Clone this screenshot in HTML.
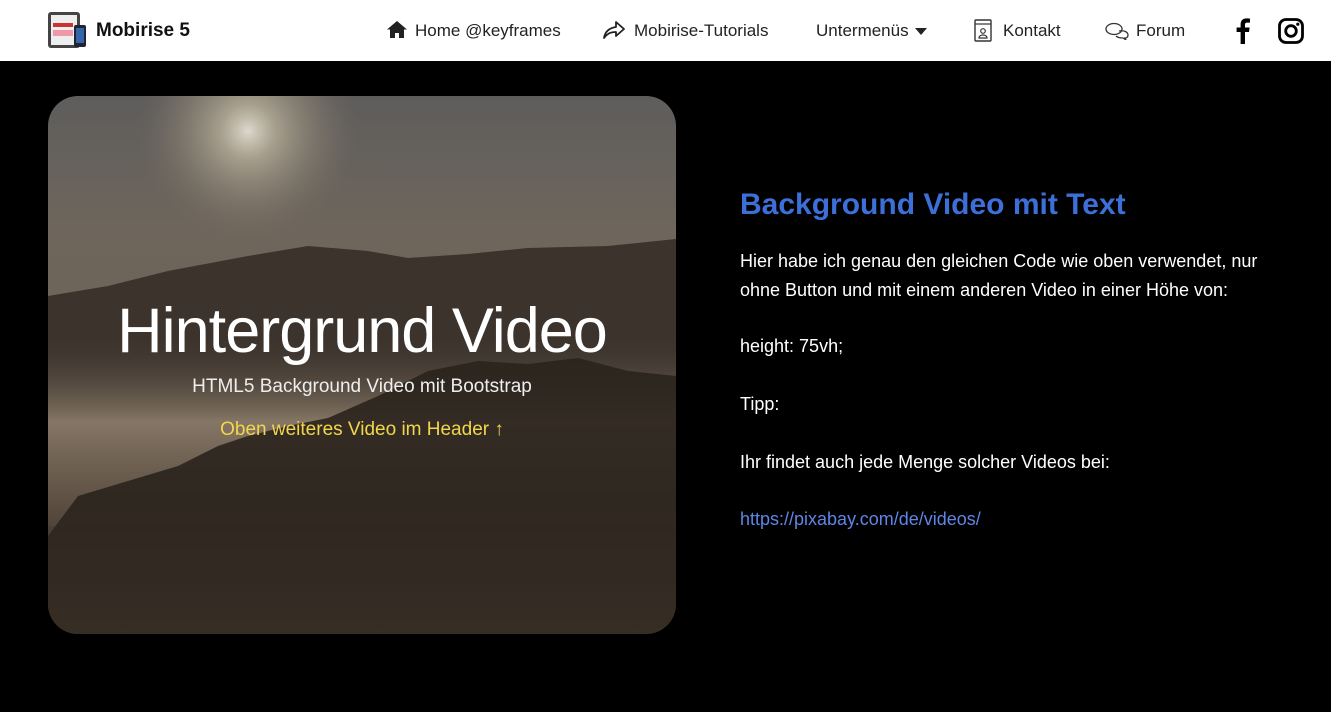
<!DOCTYPE html>
<html><head><meta charset="utf-8"><style>
*{margin:0;padding:0;box-sizing:border-box}
body{width:1331px;height:712px;background:#000;font-family:"Liberation Sans",sans-serif;overflow:hidden;position:relative}
.nav{position:absolute;left:0;top:0;width:1331px;height:61px;background:#fff}
.nav span,.nav div{position:absolute}
.it{top:21px;font-size:17px;color:#222;white-space:nowrap}
.hero{position:absolute;left:48px;top:96px;width:628px;height:538px;border-radius:30px;overflow:hidden}
.t{position:absolute;left:0;width:628px;text-align:center;white-space:nowrap}
.r{position:absolute;left:740px;color:#fff;font-size:18px;white-space:nowrap}
</style></head><body>
<div class="nav">
 <svg style="position:absolute;left:47px;top:11px" width="42" height="38" viewBox="0 0 42 38">
  <rect x="1" y="1" width="32" height="36" rx="3" fill="#444"/>
  <rect x="4" y="4" width="26" height="30" fill="#eee"/>
  <rect x="6" y="12" width="20" height="4" fill="#c33"/>
  <rect x="6" y="19" width="20" height="6" fill="#e9a"/>
  <rect x="27" y="14" width="12" height="22" rx="2" fill="#223"/>
  <rect x="29" y="17" width="8" height="15" fill="#36a"/>
 </svg>
 <span class="it" style="left:96px;top:20px;font-weight:bold;font-size:19px;color:#111">Mobirise 5</span>
 <svg style="position:absolute;left:387px;top:21px" width="20" height="17" viewBox="0 0 20 17"><path d="M10 0L0 8.5h3V17h5v-5h4v5h5V8.5h3z" fill="#222"/></svg>
 <span class="it" style="left:415px">Home @keyframes</span>
 <svg style="position:absolute;left:603px;top:21px" width="22" height="18" viewBox="0 0 22 18"><path d="M13 1l8 7-8 7v-4C7 11 4 13 1 17c1-6 5-10 12-11z" fill="none" stroke="#222" stroke-width="1.8" stroke-linejoin="round"/></svg>
 <span class="it" style="left:634px">Mobirise-Tutorials</span>
 <span class="it" style="left:816px">Untermenüs</span>
 <svg style="position:absolute;left:915px;top:28px" width="12" height="7"><path d="M0 0h12L6 7z" fill="#222"/></svg>
 <svg style="position:absolute;left:974px;top:19px" width="18" height="23" viewBox="0 0 18 23"><rect x="1" y="1" width="16" height="21" rx="1" fill="none" stroke="#333" stroke-width="1.4"/><path d="M1 5h16" stroke="#333" stroke-width="1.2"/><circle cx="9" cy="12" r="2.3" fill="none" stroke="#333" stroke-width="1.2"/><path d="M5 19c0-4 8-4 8 0z" fill="none" stroke="#333" stroke-width="1.2"/></svg>
 <span class="it" style="left:1003px">Kontakt</span>
 <svg style="position:absolute;left:1105px;top:22px" width="24" height="18" viewBox="0 0 24 18"><ellipse cx="9" cy="7" rx="8" ry="5.5" fill="none" stroke="#333" stroke-width="1.3"/><path d="M14 9c5-1 9 1 9 4s-2 3-3 3l1 2-3-2c-4 0-6-1-7-2" fill="none" stroke="#333" stroke-width="1.3"/></svg>
 <span class="it" style="left:1136px">Forum</span>
 <svg style="position:absolute;left:1236px;top:18px" width="14" height="26" viewBox="0 0 14 26"><path d="M9 26V14h4l.6-4.5H9V6.8C9 5.5 9.4 4.6 11.3 4.6H14V.6C13.5.5 12 .4 10.5.4 7 .4 4.6 2.5 4.6 6.4v3.1H.6V14h4v12z" fill="#000"/></svg>
 <svg style="position:absolute;left:1278px;top:18px" width="26" height="26" viewBox="0 0 26 26"><rect x="1.5" y="1.5" width="23" height="23" rx="6.5" fill="none" stroke="#000" stroke-width="2.8"/><circle cx="13" cy="13" r="5.3" fill="none" stroke="#000" stroke-width="2.8"/><circle cx="19.8" cy="6.2" r="1.6" fill="#000"/></svg>
</div>

<div class="hero">
 <svg width="628" height="538" viewBox="0 0 628 538" style="position:absolute;left:0;top:0">
  <defs>
   <linearGradient id="sky" x1="0" y1="0" x2="0" y2="1">
    <stop offset="0" stop-color="#5e5d5c"/><stop offset=".25" stop-color="#6e665c"/><stop offset=".45" stop-color="#6e6356"/><stop offset="1" stop-color="#3a3028"/>
   </linearGradient>
   <radialGradient id="sun" cx="200" cy="35" r="110" gradientUnits="userSpaceOnUse">
    <stop offset="0" stop-color="#dcd8cc"/><stop offset=".25" stop-color="#b3aa96" stop-opacity=".85"/><stop offset="1" stop-color="#7a6e60" stop-opacity="0"/>
   </radialGradient>
   <linearGradient id="fog" x1="0" y1="0" x2="0" y2="1">
    <stop offset="0" stop-color="#463d35" stop-opacity="0"/><stop offset=".45" stop-color="#857665"/><stop offset="1" stop-color="#5a4c3e" stop-opacity=".6"/>
   </linearGradient>
   <linearGradient id="bot" x1="0" y1="0" x2="0" y2="1">
    <stop offset="0" stop-color="#3b3128" stop-opacity="0"/><stop offset="1" stop-color="#3b3128" stop-opacity=".7"/>
   </linearGradient>
  </defs>
  <rect width="628" height="538" fill="url(#sky)"/>
  <rect width="628" height="538" fill="url(#sun)"/>
  <path d="M0 200L60 190 120 175 200 160 260 150 320 155 360 162 420 158 480 152 560 150 628 143V330H0z" fill="#3b332c"/>
  <rect x="0" y="240" width="628" height="190" fill="url(#fog)"/>
  <path d="M330 300L380 275 430 265 480 268 530 262 580 275 628 280V538H0V440L30 400 80 385 130 370 170 350 200 340 240 330 280 322z" fill="#2a231d" opacity=".9"/>
  <rect x="0" y="400" width="628" height="138" fill="url(#bot)"/>
 </svg>
 <div class="t" style="top:199px;font-size:63px;color:#fff;font-weight:300;letter-spacing:-1px">Hintergrund Video</div>
 <div class="t" style="top:280px;font-size:19px;color:#eee">HTML5 Background Video mit Bootstrap</div>
 <div class="t" style="top:323px;font-size:19px;color:#f2d64b">Oben weiteres Video im Header ↑</div>
</div>

<div class="r" style="top:188px;font-size:30px;font-weight:bold;color:#3d6fd8">Background Video mit Text</div>
<div class="r" style="top:247px;line-height:29px">Hier habe ich genau den gleichen Code wie oben verwendet, nur<br>ohne Button und mit einem anderen Video in einer Höhe von:</div>
<div class="r" style="top:336px">height: 75vh;</div>
<div class="r" style="top:394px">Tipp:</div>
<div class="r" style="top:452px">Ihr findet auch jede Menge solcher Videos bei:</div>
<div class="r" style="top:509px;color:#5d86e6">https://pixabay.com/de/videos/</div>
</body></html>
